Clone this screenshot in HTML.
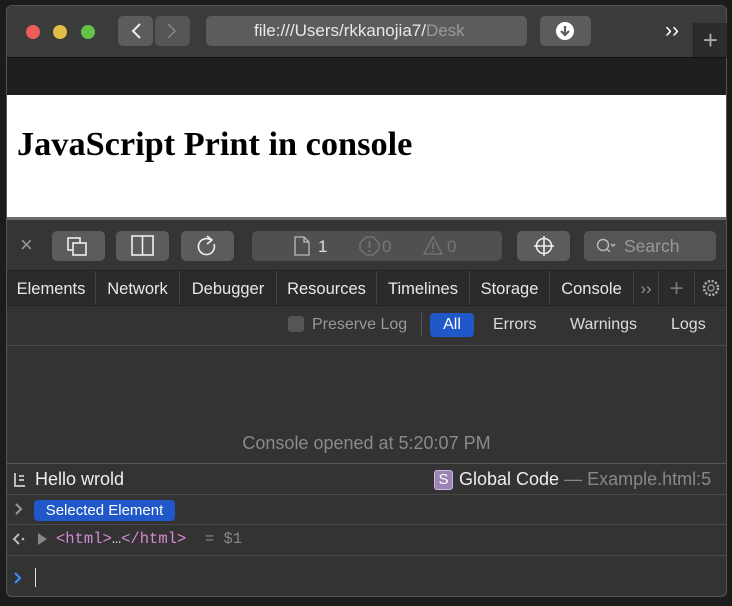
<!DOCTYPE html>
<html><head><style>
*{margin:0;padding:0;box-sizing:border-box}
body{width:732px;height:606px;background:#1c1c1c;position:relative;overflow:hidden;font-family:"Liberation Sans",sans-serif}
.a{position:absolute}
.win{left:6px;top:5px;width:721px;height:592px;background:#333;border-radius:6px;overflow:hidden;border:1px solid #555}
.btn{position:absolute;background:#5c5c5c;border-radius:5px}
.tb{position:absolute;top:271px;height:34px;color:#e8e8e8;font-size:16.5px;line-height:36px;text-align:center;border-right:1px solid #444;background:#2b2b2b}
</style></head><body>
<div class="a win"></div>
<div class="a" style="left:7px;top:6px;width:719px;height:52px;background:#3b3b3b;border-radius:6px 6px 0 0"></div>
<div class="a" style="left:26px;top:25px;width:14px;height:14px;border-radius:50%;background:#ec5f57"></div>
<div class="a" style="left:53px;top:25px;width:14px;height:14px;border-radius:50%;background:#e2bd45"></div>
<div class="a" style="left:81px;top:25px;width:14px;height:14px;border-radius:50%;background:#62c246"></div>
<div class="btn" style="left:118px;top:16px;width:35px;height:30px"></div>
<div class="btn" style="left:155px;top:16px;width:35px;height:30px;background:#555"></div>
<svg class="a" style="left:118px;top:16px" width="72" height="30"><path d="M22 8 L15 15 L22 22" stroke="#eee" stroke-width="2" fill="none"/><path d="M50 8 L57 15 L50 22" stroke="#888" stroke-width="1.5" fill="none"/></svg>
<div class="btn" style="left:206px;top:16px;width:321px;height:30px;color:#e8e8e8;font-size:17px;line-height:30px;padding-left:48px">file:///Users/rkkanojia7/<span style="color:#999">Desk</span></div>
<div class="btn" style="left:540px;top:16px;width:51px;height:30px"></div>
<svg class="a" style="left:555px;top:21px" width="20" height="20"><circle cx="10" cy="10" r="9" fill="#fff"/><path d="M10 5 V14 M6 10 L10 14 L14 10" stroke="#5c5c5c" stroke-width="2.2" fill="none"/></svg>
<div class="a" style="left:665px;top:19px;color:#fff;font-size:21px">››</div>
<div class="a" style="left:693px;top:23px;width:34px;height:35px;background:#2c2c2c;border-left:1px solid #222;color:#aaa;font-size:26px;text-align:center;line-height:34px">+</div>
<div class="a" style="left:7px;top:57px;width:719px;height:1px;background:#111"></div>
<div class="a" style="left:7px;top:58px;width:719px;height:37px;background:#1f1f1f"></div>
<div class="a" style="left:7px;top:95px;width:719px;height:122px;background:#fff"></div>
<div class="a" style="left:17px;top:125px;font-family:'Liberation Serif',serif;font-weight:bold;font-size:34.3px;color:#000">JavaScript Print in console</div>
<div class="a" style="left:7px;top:217px;width:719px;height:3px;background:#6a6a6a"></div>
<div class="a" style="left:7px;top:220px;width:719px;height:50px;background:#353535"></div>
<div class="a" style="left:20px;top:232px;color:#999;font-size:22px">×</div>
<div class="btn" style="left:52px;top:231px;width:53px;height:30px"></div>
<svg class="a" style="left:66px;top:236px" width="24" height="22"><rect x="2" y="2" width="12" height="12" stroke="#eee" stroke-width="1.6" fill="none"/><rect x="7" y="7" width="13" height="12" stroke="#eee" stroke-width="1.6" fill="#5c5c5c"/></svg>
<div class="btn" style="left:116px;top:231px;width:53px;height:30px"></div>
<svg class="a" style="left:131px;top:235px" width="24" height="22"><rect x="1" y="1" width="21" height="19" stroke="#eee" stroke-width="1.6" fill="none"/><line x1="11.5" y1="1" x2="11.5" y2="20" stroke="#eee" stroke-width="1.6"/></svg>
<div class="btn" style="left:181px;top:231px;width:53px;height:30px"></div>
<svg class="a" style="left:196px;top:234px" width="24" height="26"><path d="M15 6 A8 8 0 1 0 18 10" stroke="#eee" stroke-width="1.6" fill="none"/><path d="M11 2 L16 6 L11 10" stroke="#eee" stroke-width="1.6" fill="none"/></svg>
<div class="btn" style="left:252px;top:231px;width:250px;height:30px;background:#505050"></div>
<svg class="a" style="left:293px;top:236px" width="20" height="20"><path d="M2 1 H11 L16 6 V19 H2 Z M11 1 V6 H16" stroke="#bbb" stroke-width="1.3" fill="none"/></svg>
<div class="a" style="left:318px;top:237px;color:#ddd;font-size:17px">1</div>
<svg class="a" style="left:359px;top:236px" width="22" height="20"><path d="M7 1 H14 L20 7 V13 L14 19 H7 L1 13 V7 Z" stroke="#777" stroke-width="1.3" fill="none"/><path d="M10.5 5 V12 M10.5 14 V16" stroke="#777" stroke-width="1.6"/></svg>
<div class="a" style="left:382px;top:237px;color:#777;font-size:17px">0</div>
<svg class="a" style="left:423px;top:236px" width="22" height="20"><path d="M10 1 L19 18 H1 Z" stroke="#777" stroke-width="1.3" fill="none"/><path d="M10 7 V13 M10 14.5 V16" stroke="#777" stroke-width="1.5"/></svg>
<div class="a" style="left:447px;top:237px;color:#777;font-size:17px">0</div>
<div class="btn" style="left:517px;top:231px;width:53px;height:30px"></div>
<svg class="a" style="left:532px;top:234px" width="24" height="24"><circle cx="12" cy="12" r="7.5" stroke="#eee" stroke-width="1.6" fill="none"/><path d="M12 2 V22 M2 12 H22" stroke="#eee" stroke-width="1.6"/></svg>
<div class="btn" style="left:584px;top:231px;width:132px;height:30px;background:#555"></div>
<svg class="a" style="left:596px;top:238px" width="24" height="18"><circle cx="7" cy="7" r="5.5" stroke="#bbb" stroke-width="1.4" fill="none"/><path d="M11 11 L14 14 M15 6 L17 8 L19 6" stroke="#bbb" stroke-width="1.4" fill="none"/></svg>
<div class="a" style="left:624px;top:236px;color:#999;font-size:17.5px">Search</div>
<div class="a" style="left:7px;top:270px;width:719px;height:1px;background:#222"></div>
<div class="tb" style="left:7px;width:89px">Elements</div>
<div class="tb" style="left:96px;width:84px">Network</div>
<div class="tb" style="left:180px;width:97px">Debugger</div>
<div class="tb" style="left:277px;width:100px">Resources</div>
<div class="tb" style="left:377px;width:93px">Timelines</div>
<div class="tb" style="left:470px;width:80px">Storage</div>
<div class="tb" style="left:550px;width:84px">Console</div>
<div class="tb" style="left:634px;width:25px;color:#999">››</div>
<div class="tb" style="left:659px;width:36px;color:#777;font-size:24px">+</div>
<div class="tb" style="left:695px;width:31px;border:none"></div>
<svg class="a" style="left:701px;top:278px" width="20" height="20"><circle cx="10" cy="10" r="3" stroke="#aaa" stroke-width="1.2" fill="none"/><circle cx="10" cy="10" r="7" stroke="#aaa" stroke-width="2.5" stroke-dasharray="2.2 1.5" fill="none"/></svg>
<div class="a" style="left:7px;top:305px;width:719px;height:1px;background:#222"></div>
<div class="a" style="left:288px;top:316px;width:16px;height:16px;border-radius:3px;background:#555"></div>
<div class="a" style="left:312px;top:316px;color:#999;font-size:16px">Preserve Log</div>
<div class="a" style="left:421px;top:313px;width:1px;height:24px;background:#555"></div>
<div class="a" style="left:430px;top:313px;width:44px;height:24px;border-radius:4px;background:#2158c9;color:#fff;font-size:16px;text-align:center;line-height:24px">All</div>
<div class="a" style="left:493px;top:316px;color:#ddd;font-size:16px">Errors</div>
<div class="a" style="left:570px;top:316px;color:#ddd;font-size:16px">Warnings</div>
<div class="a" style="left:671px;top:316px;color:#ddd;font-size:16px">Logs</div>
<div class="a" style="left:7px;top:345px;width:719px;height:1px;background:#4a4a4a"></div>
<div class="a" style="left:7px;top:433px;width:719px;text-align:center;color:#8a8a8a;font-size:18px">Console opened at 5:20:07 PM</div>
<div class="a" style="left:7px;top:463px;width:719px;height:1px;background:#555"></div>
<svg class="a" style="left:14px;top:472px" width="14" height="16"><path d="M1 1 V14 H11 M5 4 H10 M5 8 H10" stroke="#bbb" stroke-width="2" fill="none"/></svg>
<div class="a" style="left:35px;top:469px;color:#eee;font-size:18px">Hello wrold</div>
<div class="a" style="left:434px;top:470px;width:19px;height:20px;border-radius:3px;background:#9b84b4;border:1px solid #c8b6dc;color:#fff;font-size:15px;text-align:center;line-height:18px">S</div>
<div class="a" style="left:459px;top:469px;color:#eee;font-size:18px;white-space:nowrap">Global Code <span style="color:#888">— Example.html:5</span></div>
<div class="a" style="left:7px;top:494px;width:719px;height:1px;background:#4a4a4a"></div>
<svg class="a" style="left:14px;top:502px" width="10" height="14"><path d="M2 2 L7 7 L2 12" stroke="#999" stroke-width="2" fill="none"/></svg>
<div class="a" style="left:34px;top:500px;width:141px;height:21px;border-radius:4px;background:#2158c9;color:#fff;font-size:15px;line-height:21px;text-align:center">Selected Element</div>
<div class="a" style="left:7px;top:524px;width:719px;height:1px;background:#4a4a4a"></div>
<svg class="a" style="left:12px;top:532px" width="16" height="14"><path d="M7 2 L2 7 L7 12" stroke="#bbb" stroke-width="2" fill="none"/><circle cx="11" cy="7" r="1.3" fill="#bbb"/></svg>
<svg class="a" style="left:37px;top:532px" width="12" height="14"><path d="M1 1 L10 7 L1 13 Z" fill="#888"/></svg>
<div class="a" style="left:56px;top:530px;font-family:'Liberation Mono',monospace;font-size:15.5px;color:#d78ad4;white-space:nowrap">&lt;html&gt;<span style="color:#ccc">…</span>&lt;/html&gt;<span style="color:#888">&nbsp;&nbsp;= $1</span></div>
<div class="a" style="left:7px;top:555px;width:719px;height:1px;background:#4a4a4a"></div>
<svg class="a" style="left:13px;top:571px" width="10" height="14"><path d="M2 2 L7 7 L2 12" stroke="#3d8cf0" stroke-width="2.2" fill="none"/></svg>
<div class="a" style="left:35px;top:568px;width:1px;height:19px;background:#ddd"></div>
</body></html>
